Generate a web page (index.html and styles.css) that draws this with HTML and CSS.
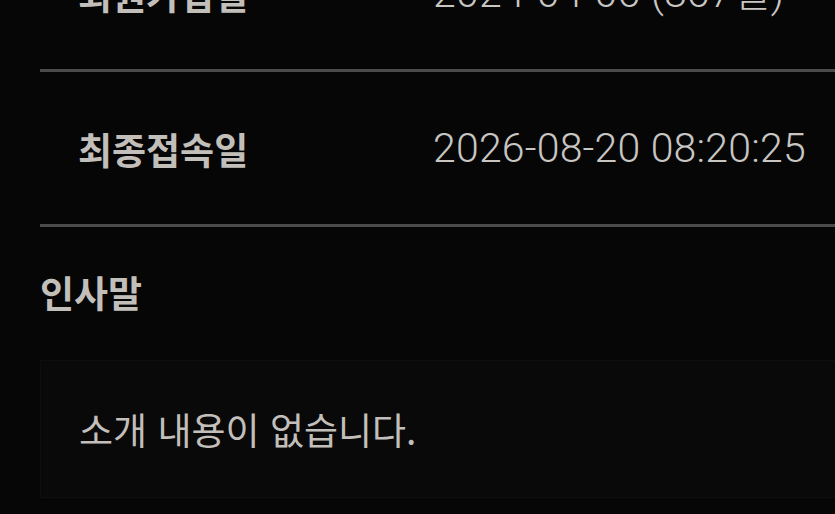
FILE: index.html
```html
<!DOCTYPE html>
<html lang="ko">
<head>
<meta charset="utf-8">
<link rel="stylesheet" href="styles.css">
</head>
<body>
<main class="page">
  <section class="info">
    <div class="row">
      <div class="label">회원가입일</div>
      <div class="value">2024-04-06 (867일)</div>
    </div>
    <div class="row">
      <div class="label">최종접속일</div>
      <div class="value">2026-08-20 08:20:25</div>
    </div>
  </section>
  <section class="greeting">
    <h2 class="greeting-title">인사말</h2>
    <div class="greeting-box">소개 내용이 없습니다.</div>
  </section>
</main>
</body>
</html>
```
FILE: styles.css
```css
html, body {
  margin: 0;
  padding: 0;
  background: #060606;
  overflow: hidden;
}
body {
  font-family: "Noto Sans CJK KR", "Noto Sans", sans-serif;
  color: #c2bfbb;
}
.page {
  margin-top: -83px;
  margin-left: 40px;
}
.row {
  display: flex;
  align-items: center;
  height: 152px;
  border-bottom: 3px solid #4a4a4a;
  padding-left: 38px;
}
.label {
  width: 355px;
  flex: none;
  font-size: 37px;
  font-weight: 700;
  line-height: 48px;
  padding-top: 1px;
}
.value {
  font-family: "Roboto", "Noto Sans CJK KR", sans-serif;
  font-size: 41px;
  font-weight: 300;
  letter-spacing: 0.2px;
  line-height: 48px;
  color: #c8c6c3;
}
.greeting-title {
  margin: 41px 0 0;
  font-size: 37px;
  font-weight: 700;
  line-height: 48px;
}
.greeting-box {
  margin-top: 44px;
  height: 138px;
  box-sizing: border-box;
  padding: 0 38px;
  display: flex;
  align-items: center;
  background: #090909;
  border: 1px solid #0e0e0e;
  border-right: none;
  font-size: 37px;
  font-weight: 400;
  line-height: 48px;
}
```
